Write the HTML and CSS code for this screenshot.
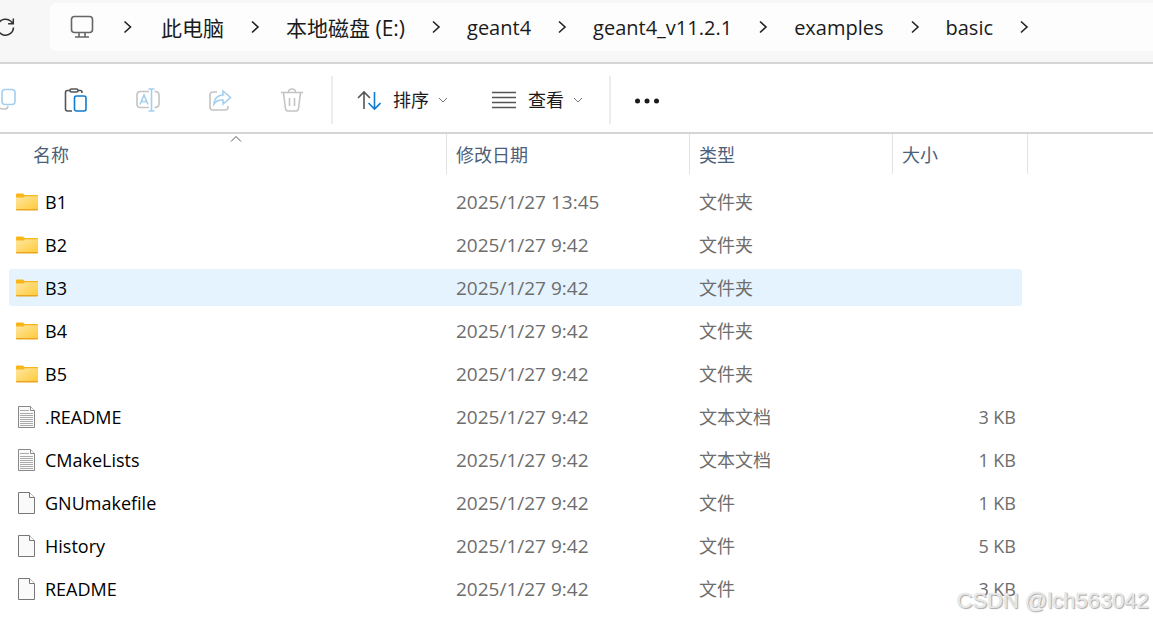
FILE: index.html
```html
<!DOCTYPE html>
<html lang="zh-CN">
<head>
    <meta charset="UTF-8">
    <meta name="viewport" content="width=device-width, initial-scale=1.0">
    <title>basic</title>
    <link rel="stylesheet" href="styles.css">
</head>
<body>
    <header class="topbar">
        <button class="refresh" type="button" aria-label="刷新">
            <svg width="20" height="20" viewBox="0 0 20 20"><path d="M17.500 10.500a8 8 0 1 1-2.600-6.200L17 6.500M17.300 1.500v5.200h-5.200"/></svg>
        </button>
        <nav class="address">
            <svg class="pc" width="24" height="24" viewBox="0 0 24 24"><rect x="1.500" y="1.500" width="21" height="16" rx="3"/><path d="M9 18v4M15 18v4M5 22h14"/></svg>
            <svg class="sep sep-first" viewBox="0 0 62 20"><path d="M28 4.500l6 5.500l-6 5.500"/></svg>
            <a class="zh" href="#">此电脑</a>
            <svg class="sep" viewBox="0 0 62 20"><path d="M28 4.500l6 5.500l-6 5.500"/></svg>
            <a class="zh" href="#">本地磁盘 (E:)</a>
            <svg class="sep" viewBox="0 0 62 20"><path d="M28 4.500l6 5.500l-6 5.500"/></svg>
            <a href="#">geant4</a>
            <svg class="sep" viewBox="0 0 62 20"><path d="M28 4.500l6 5.500l-6 5.500"/></svg>
            <a href="#">geant4_v11.2.1</a>
            <svg class="sep" viewBox="0 0 62 20"><path d="M28 4.500l6 5.500l-6 5.500"/></svg>
            <a href="#">examples</a>
            <svg class="sep" viewBox="0 0 62 20"><path d="M28 4.500l6 5.500l-6 5.500"/></svg>
            <a href="#">basic</a>
            <svg class="sep" viewBox="0 0 62 20"><path d="M28 4.500l6 5.500l-6 5.500"/></svg>
        </nav>
    </header>

    <div class="toolbar">
        <button class="tool" type="button" aria-label="复制">
            <svg width="24" height="24" viewBox="0 0 24 24"><rect class="lightblue" x="10" y="1.500" width="13" height="15" rx="3"/><path class="lightgray" d="M6.500 5v12a4 4 0 0 0 4 4h2.500q2.500 0 3-3"/></svg>
        </button>
        <button class="tool" type="button" aria-label="粘贴">
            <svg width="24" height="24" viewBox="0 0 24 24"><path class="dark" d="M6 2.500H3.500Q1.500 2.500 1.500 4.500V21Q1.500 23 3.500 23H8M14 2.500h2.500Q18 2.500 18 4.500V5"/><rect class="dark" x="6" y="1" width="8" height="3" rx="1.500"/><rect class="blue" x="10.500" y="8" width="11.500" height="15" rx="2"/></svg>
        </button>
        <button class="tool" type="button" aria-label="重命名" disabled>
            <svg width="24" height="24" viewBox="0 0 24 24"><path class="lightgray" d="M13 3.500H4.500Q1 3.500 1 7v9q0 3.500 3.500 3.500H13M18.500 3.500q4.500 0 4.500 3.500v9q0 3.500-4.500 3.500"/><path class="lightblue" d="M4 16.500L8 7l4 9.500M5.500 13.500h5M12.500 1h6M15.500 1v22M12.500 23h6"/></svg>
        </button>
        <button class="tool" type="button" aria-label="共享" disabled>
            <svg width="24" height="24" viewBox="0 0 24 24"><path class="lightgray" d="M9 4H5Q2 4 2 7v12q0 3 3 3h12q3 0 3-3v-1"/><path class="lightblue" d="M15 3l7.500 6.500L15 16v-4Q9 11.500 6 16Q6.500 7.500 15 7z"/></svg>
        </button>
        <button class="tool" type="button" aria-label="删除" disabled>
            <svg width="24" height="24" viewBox="0 0 24 24"><path class="lightgray" d="M1 4.500h22M8.500 4q0-3 3.500-3t3.500 3M3.500 5l2 15.500q.3 2.500 2.500 2.500h8q2.200 0 2.500-2.500L20.500 5M9.500 10v8M14.500 10v8"/></svg>
        </button>
        <span class="divider"></span>
        <button class="menu" type="button">
            <svg width="24" height="24" viewBox="0 0 24 24"><path class="dark" d="M7 21V4M1 10l6-6 6 6"/><path class="blue" d="M17.500 4v17M11.500 15l6 6 6-6"/></svg>
            <span>排序</span>
            <svg class="chevron" width="10" height="10" viewBox="0 0 10 10"><path d="M1 3l4 4 4-4"/></svg>
        </button>
        <button class="menu" type="button">
            <svg width="24" height="24" viewBox="0 0 24 24"><path class="dark" d="M0 4.500h24M0 9.500h24M0 14.500h24M0 19.500h24"/></svg>
            <span>查看</span>
            <svg class="chevron" width="10" height="10" viewBox="0 0 10 10"><path d="M1 3l4 4 4-4"/></svg>
        </button>
        <span class="divider"></span>
        <button class="more" type="button" aria-label="更多">
            <svg width="24" height="24" viewBox="0 0 24 24"><circle cx="2.500" cy="13" r="2.500"/><circle cx="12" cy="13" r="2.500"/><circle cx="21.500" cy="13" r="2.500"/></svg>
        </button>
    </div>

    <!-- icons used in the list -->
    <svg class="defs" width="0" height="0">
        <defs>
            <linearGradient id="fold" x1="0" y1="0" x2="1" y2="1">
                <stop offset="0" stop-color="#ffe7a2"/>
                <stop offset="1" stop-color="#ffc937"/>
            </linearGradient>
        </defs>
        <symbol id="folder" viewBox="0 0 22 24">
            <path fill="#f9b61b" d="M0 4.500q0-1 1-1h6l1.500 1.500H22v4H0z"/>
            <path fill="url(#fold)" d="M0 7.500h7.500l1.500-1.200h13V20H0z"/>
            <path fill="#eba51f" d="M0 19h22v.5q0 1-1 1H1q-1 0-1-1z"/>
        </symbol>
        <symbol id="file" viewBox="0 0 22 24">
            <path fill="#fafafa" stroke="#777" d="M2.500 1.500h11l5 5v16h-16z"/>
            <path fill="#fff" stroke="#777" d="M13.500 1.500v5h5"/>
        </symbol>
        <symbol id="text" viewBox="0 0 22 24">
            <path fill="#fafafa" stroke="#888" d="M2.500 1.500h12l4 4v17h-16z"/>
            <path fill="#fff" stroke="#888" d="M14.500 1.500v4h4"/>
            <path stroke="#aaa" d="M4 5.500h9M4 8.500h13M4 10.500h13M4 12.500h13M4 14.500h13M4 16.500h13M4 18.500h13M4 20.500h13"/>
        </symbol>
    </svg>

    <main class="list">
        <table>
            <colgroup>
                <col class="col-name">
                <col class="col-date">
                <col class="col-type">
                <col class="col-size">
                <col class="col-end">
            </colgroup>
            <thead>
                <tr>
                    <th class="name-head">
                        <button type="button">名称</button>
                        <svg class="sort-mark" width="12" height="8" viewBox="0 0 12 8"><path d="M1 6.500l5-5 5 5"/></svg>
                    </th>
                    <th><button type="button">修改日期</button></th>
                    <th><button type="button">类型</button></th>
                    <th colspan="2"><button type="button">大小</button></th>
                </tr>
            </thead>
            <tbody>
                <tr>
                    <td class="name"><svg><use href="#folder"/></svg>B1</td>
                    <td class="date">2025/1/27 13:45</td><td>文件夹</td><td class="size"></td>
                </tr>
                <tr>
                    <td class="name"><svg><use href="#folder"/></svg>B2</td>
                    <td class="date">2025/1/27 9:42</td><td>文件夹</td><td class="size"></td>
                </tr>
                <tr class="hover">
                    <td class="name"><svg><use href="#folder"/></svg>B3</td>
                    <td class="date">2025/1/27 9:42</td><td>文件夹</td><td class="size"></td>
                </tr>
                <tr>
                    <td class="name"><svg><use href="#folder"/></svg>B4</td>
                    <td class="date">2025/1/27 9:42</td><td>文件夹</td><td class="size"></td>
                </tr>
                <tr>
                    <td class="name"><svg><use href="#folder"/></svg>B5</td>
                    <td class="date">2025/1/27 9:42</td><td>文件夹</td><td class="size"></td>
                </tr>
                <tr>
                    <td class="name"><svg><use href="#text"/></svg>.README</td>
                    <td class="date">2025/1/27 9:42</td><td>文本文档</td><td class="size">3 KB</td>
                </tr>
                <tr>
                    <td class="name"><svg><use href="#text"/></svg>CMakeLists</td>
                    <td class="date">2025/1/27 9:42</td><td>文本文档</td><td class="size">1 KB</td>
                </tr>
                <tr>
                    <td class="name"><svg><use href="#file"/></svg>GNUmakefile</td>
                    <td class="date">2025/1/27 9:42</td><td>文件</td><td class="size">1 KB</td>
                </tr>
                <tr>
                    <td class="name"><svg><use href="#file"/></svg>History</td>
                    <td class="date">2025/1/27 9:42</td><td>文件</td><td class="size">5 KB</td>
                </tr>
                <tr>
                    <td class="name"><svg><use href="#file"/></svg>README</td>
                    <td class="date">2025/1/27 9:42</td><td>文件</td><td class="size">3 KB</td>
                </tr>
            </tbody>
        </table>
    </main>

    <div class="watermark">CSDN @lch563042</div>
</body>
</html>
```

FILE: styles.css
```css
* {
    box-sizing: border-box;
}

body {
    margin: 0;
    background: #fff;
    color: #1b1b1b;
    font-family: "Open Sans", "Noto Sans CJK SC", sans-serif;
    font-size: 18px;
    overflow: hidden;
}

button {
    padding: 0;
    border: 0;
    background: none;
    color: inherit;
    font: inherit;
}

svg {
    display: block;
    flex: none;
    fill: none;
}

/* address bar */
.topbar {
    display: flex;
    height: 64px;
    padding-top: 3px;
    background: #f7f7f7;
    border-bottom: 2px solid #d5d5d5;
}

.refresh {
    width: 50px;
    height: 48px;
    flex: none;
}

.refresh svg {
    margin-left: -4px;
    stroke: #333;
    stroke-width: 1.5;
}

.address {
    display: flex;
    flex: 1;
    align-items: center;
    height: 48px;
    padding-left: 20px;
    background: #fdfdfd;
    border-radius: 6px 0 0 6px;
    font-size: 20px;
    white-space: nowrap;
}

.address a {
    color: #1b1b1b;
    text-decoration: none;
}

.address .zh {
    font-size: 21px;
}

.pc {
    stroke: #666;
    stroke-width: 1.6;
}

.sep {
    width: 62px;
    height: 20px;
    stroke: #222;
    stroke-width: 1.6;
}

.sep-first {
    width: 67px;
}

/* command bar */
.toolbar {
    display: flex;
    align-items: center;
    height: 70px;
    padding-top: 4px;
    border-bottom: 2px solid #d5d5d5;
}

.tool {
    display: flex;
    justify-content: center;
    flex: none;
    width: 72px;
}

.tool:first-child {
    margin-left: -32px;
}

.toolbar svg {
    stroke-width: 1.6;
}

.dark { stroke: #555; }
.blue { stroke: #0f7bd4; }
.lightblue { stroke: #a3cfef; }
.lightgray { stroke: #c4c4c4; }

.divider {
    width: 2px;
    height: 48px;
    margin-left: 3px;
    background: #ececec;
}

.menu {
    display: flex;
    align-items: center;
    gap: 12px;
    margin-left: 24px;
    line-height: 24px;
    white-space: nowrap;
}

.menu + .menu {
    margin-left: 44px;
}

.menu + .divider {
    margin-left: 26px;
}

.toolbar .chevron {
    margin-left: -3px;
    stroke: #777;
    stroke-width: 1;
}

.more {
    margin-left: 24px;
}

.more svg {
    fill: #1b1b1b;
}

/* file list */
.defs {
    position: absolute;
}

.list {
    padding-left: 9px;
}

table {
    width: 1019px;
    border-collapse: separate;
    border-spacing: 0;
    table-layout: fixed;
}

.col-name { width: 438px; }
.col-date { width: 243px; }
.col-type { width: 203px; }
.col-size { width: 129px; }
.col-end { width: 6px; }

th {
    height: 46px;
    padding: 0;
    font-weight: normal;
    vertical-align: top;
}

th button {
    display: block;
    width: 100%;
    height: 40px;
    padding-left: 9px;
    border-right: 1px solid #e2e2e2;
    color: #4c607a;
    text-align: left;
}

.name-head {
    position: relative;
}

.name-head button {
    padding-left: 24px;
}

.sort-mark {
    position: absolute;
    top: 1px;
    left: 221px;
    stroke: #555;
}

td {
    height: 43px;
    padding: 0 0 0 9px;
    border: solid transparent;
    border-width: 3px 0;
    background-clip: padding-box;
    color: #6d6d6d;
    line-height: 24px;
    white-space: nowrap;
}

.name {
    padding-left: 7px;
    color: #000;
}

.name svg {
    float: left;
    width: 22px;
    height: 24px;
    margin-right: 7px;
}

.date {
    font-size: 19px;
}

.size {
    padding-right: 6px;
    text-align: right;
}

.hover td {
    background-color: #e5f3ff;
}

.hover .name {
    border-radius: 3px 0 0 3px / 6px 0 0 6px;
}

.hover .size {
    border-radius: 0 3px 3px 0 / 0 6px 6px 0;
}

.watermark {
    position: absolute;
    right: 4px;
    bottom: 7px;
    color: rgba(255, 255, 255, 0.7);
    font-family: "Liberation Sans", Arial, sans-serif;
    font-size: 22px;
    line-height: 26px;
    text-shadow: 1px 1px 1px #aaa, 0 0 1px #bbb;
}
```
